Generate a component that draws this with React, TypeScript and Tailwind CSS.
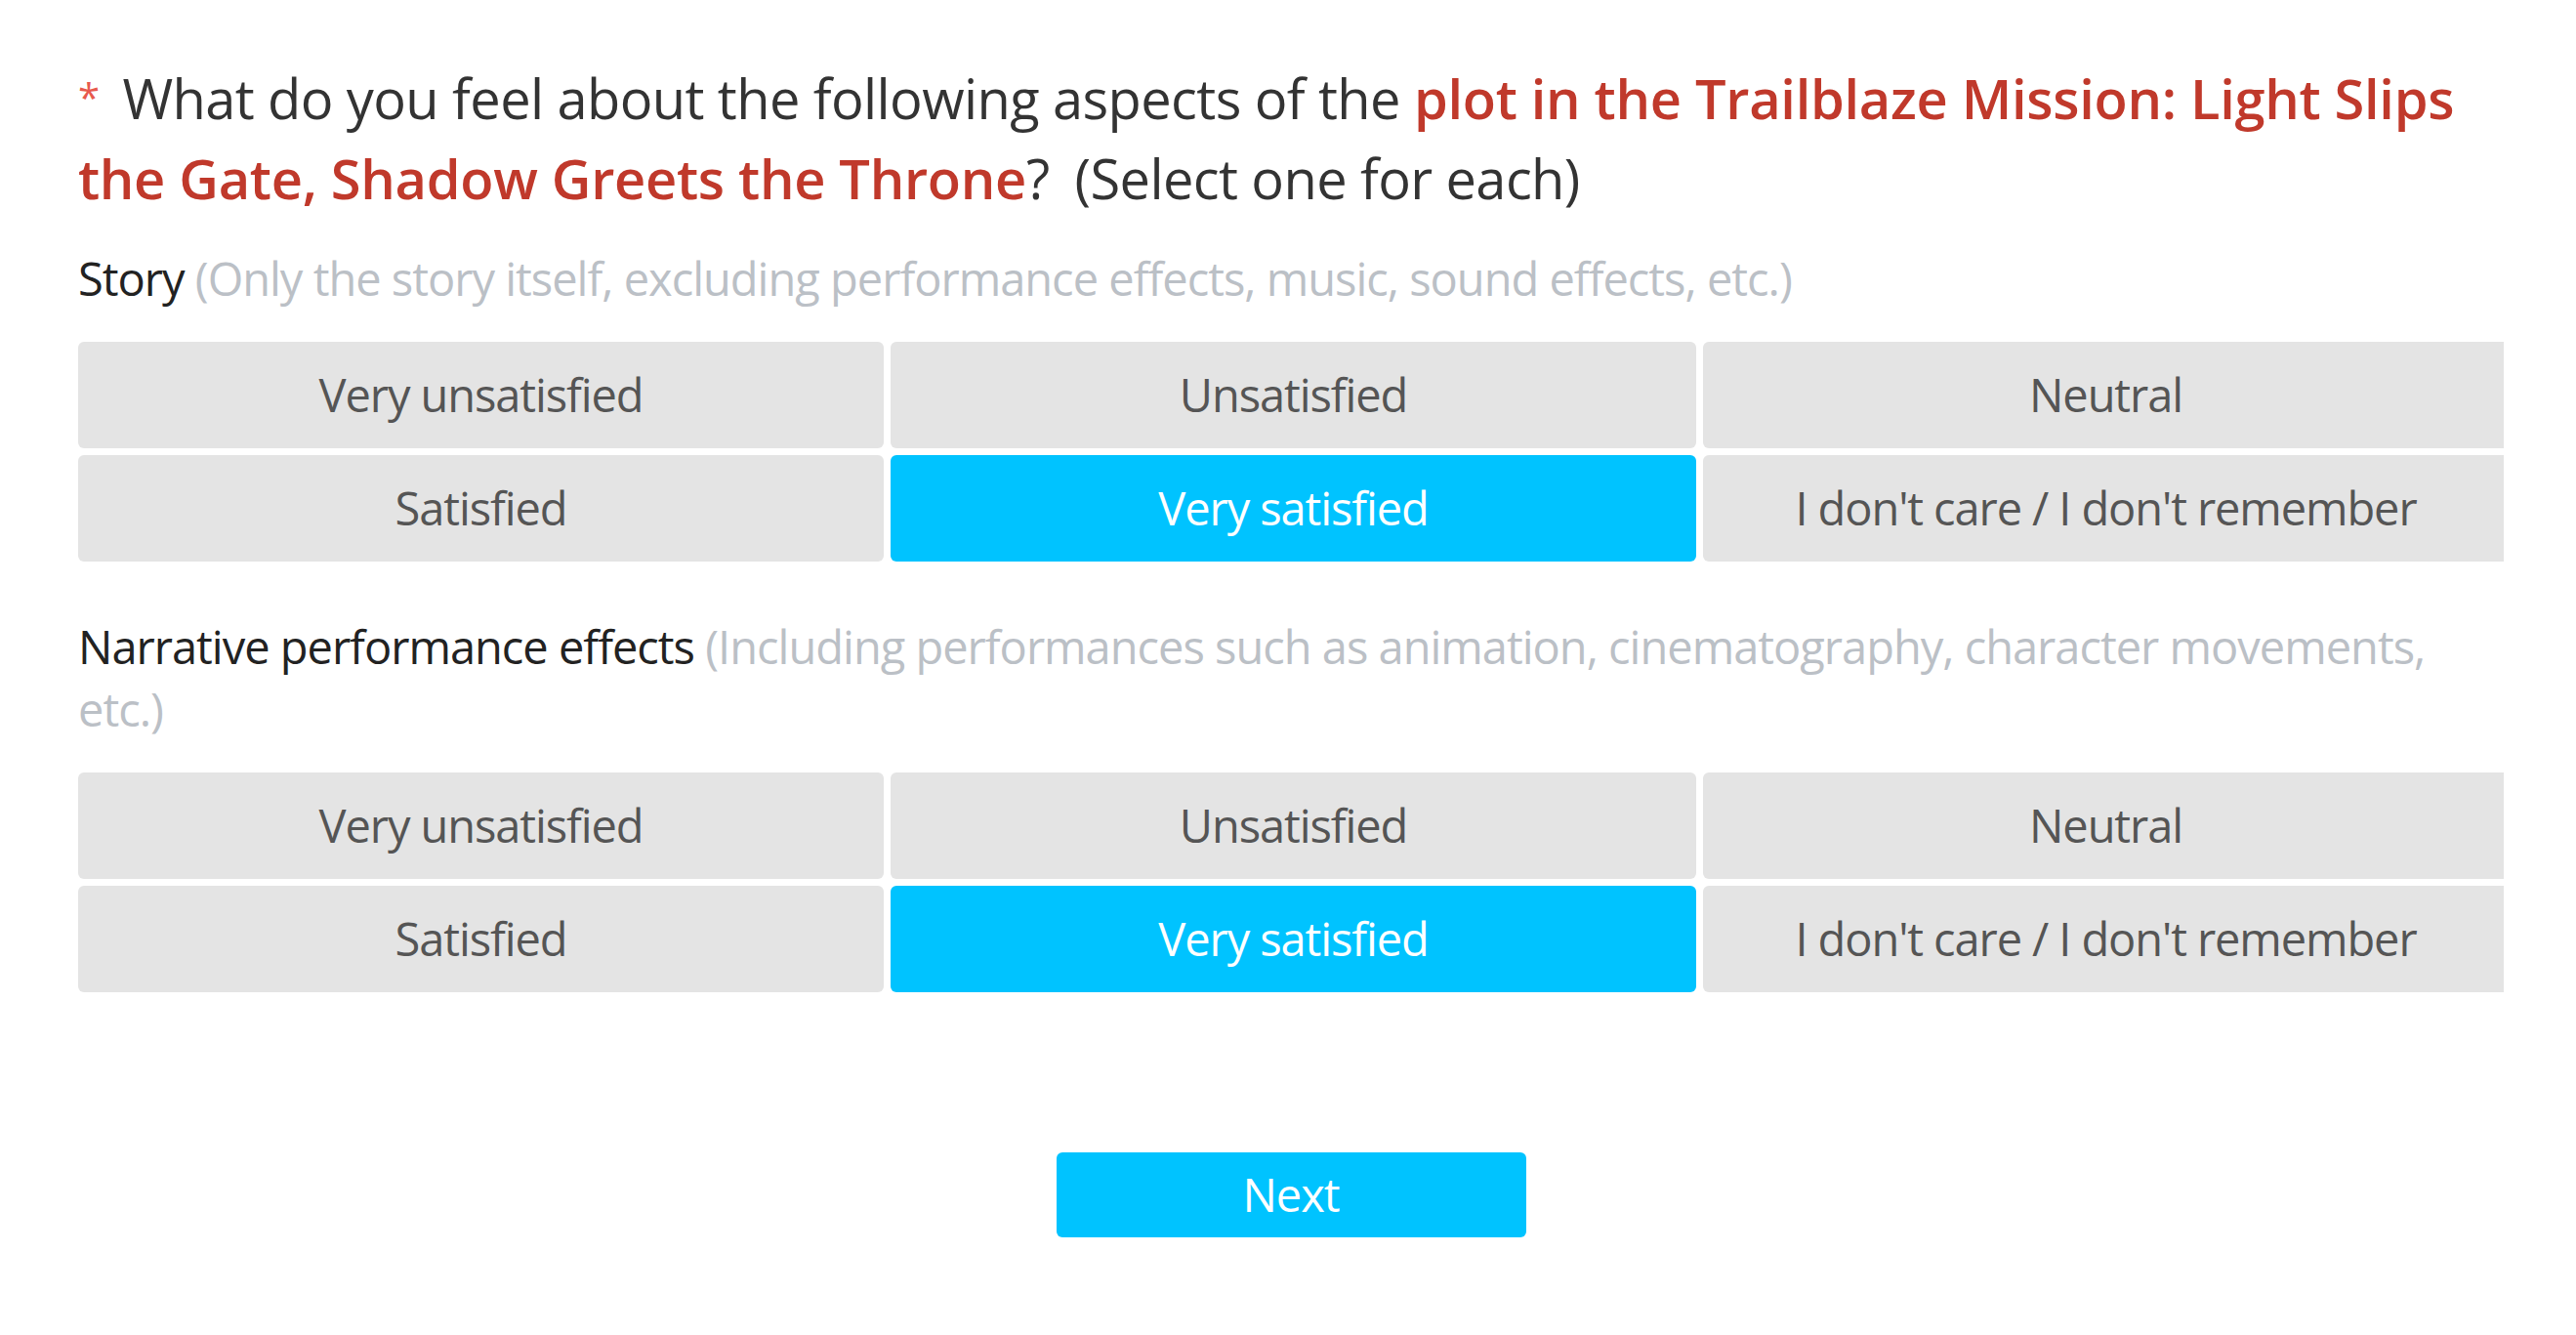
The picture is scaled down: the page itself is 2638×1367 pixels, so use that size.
const OPTIONS = [
  'Very unsatisfied',
  'Unsatisfied',
  'Neutral',
  'Satisfied',
  'Very satisfied',
  "I don't care / I don't remember",
];

function OptionGrid({ selected }: { selected: string }) {
  return (
    <div className="overflow-hidden">
      <div className="grid grid-cols-[repeat(3,825px)] gap-[7px]">
        {OPTIONS.map((opt) => (
          <button
            key={opt}
            className={
              opt === selected
                ? 'h-[109px] rounded-[6px] bg-[#00c3ff] text-white text-[47px] tracking-[-1.1px]'
                : 'h-[109px] rounded-[6px] bg-[#e4e4e4] text-[#555] text-[47px] tracking-[-1.1px]'
            }
          >
            {opt}
          </button>
        ))}
      </div>
    </div>
  );
}

export default function App() {
  return (
    <div className="min-h-screen bg-white font-['Open_Sans','Noto_Sans',sans-serif]">
      <div className="pl-[80px] pr-[74px] pt-[59px]">
        <h1 className="text-[56px] leading-[82px] text-[#333] font-normal tracking-[-0.6px]">
          <span className="text-[#e8594d] text-[40px] align-top mr-[24px]">*</span>
          What do you feel about the following aspects of the{' '}
          <span className="font-semibold text-[#c0392b] tracking-[-0.3px]">
            plot in the Trailblaze Mission: Light Slips the Gate, Shadow Greets the Throne
          </span>
          ?<span className="ml-[26px]">(Select one for each)</span>
        </h1>

        <p className="mt-[30px] text-[47px] leading-[64px] text-[#222] tracking-[-1px]">
          Story <span className="text-[#bbc0c6]">(Only the story itself, excluding performance effects, music, sound effects, etc.)</span>
        </p>
        <div className="mt-[33px]">
          <OptionGrid selected="Very satisfied" />
        </div>

        <p className="mt-[55px] text-[47px] leading-[64px] text-[#222] tracking-[-1px]">
          Narrative performance effects{' '}
          <span className="text-[#bbc0c6]">
            (Including performances such as animation, cinematography, character movements, etc.)
          </span>
        </p>
        <div className="mt-[33px]">
          <OptionGrid selected="Very satisfied" />
        </div>

        <div className="mt-[164px] flex justify-center">
          <button className="w-[481px] h-[87px] rounded-[6px] bg-[#00c3ff] text-white text-[47px] tracking-[-1px]">
            Next
          </button>
        </div>
      </div>
    </div>
  );
}
